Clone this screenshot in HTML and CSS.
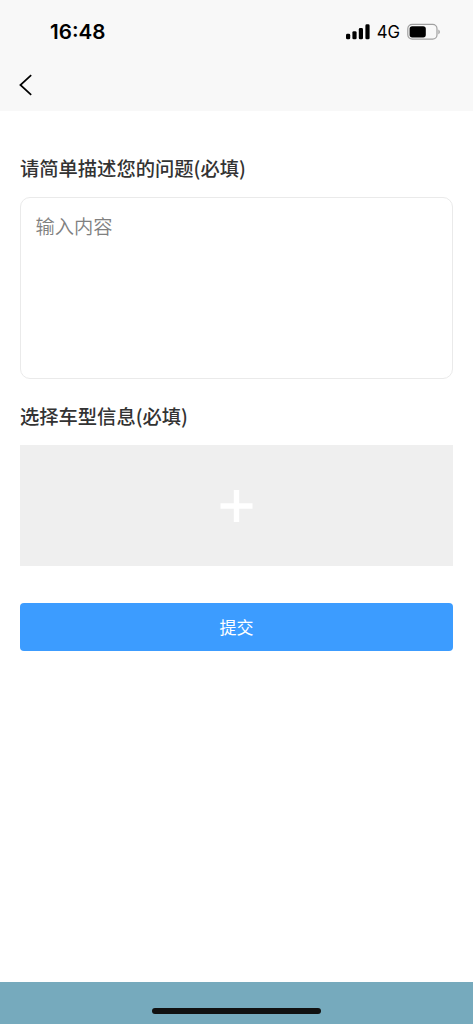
FILE: index.html
```
<!DOCTYPE html>
<html lang="zh-CN">
<head>
    <meta charset="UTF-8">
    <meta name="viewport" content="width=device-width, initial-scale=1.0">
    <title>提交问题</title>
    <link rel="stylesheet" href="styles.css">
</head>
<body>

<header>
    <div class="status-bar">
        <span class="time">16:48</span>
        <div class="status-icons">
            <svg class="signal" width="24" height="16" viewBox="0 0 24 16">
                <rect x="0" y="9.8" width="4.2" height="5.5" rx="1.4"/>
                <rect x="6.4" y="7.2" width="4.2" height="8.1" rx="1.4"/>
                <rect x="12.8" y="4" width="4.2" height="11.3" rx="1.4"/>
                <rect x="19.4" y="0.3" width="4.2" height="15" rx="1.4"/>
            </svg>
            <span class="network">4G</span>
            <svg class="battery" width="34" height="18" viewBox="0 0 34 18">
                <rect x="0.8" y="1.4" width="29.2" height="14.8" rx="4.4" fill="none" stroke="#a0a0a0" stroke-width="1.2"/>
                <rect x="2.6" y="3.2" width="16.2" height="11.2" rx="2.6"/>
                <path d="M31.4 6.4c1.9.7 1.9 4.1 0 4.8z" fill="#a0a0a0"/>
            </svg>
        </div>
    </div>
    <a href="#" class="back" aria-label="返回">
        <svg width="14" height="22" viewBox="0 0 14 22">
            <path d="M12.2 1.2L1.4 11l10.8 9.8" fill="none" stroke="#000" stroke-width="1.7"/>
        </svg>
    </a>
</header>

<form class="container">
    <label for="question">请简单描述您的问题(必填)</label>
    <textarea id="question" placeholder="输入内容"></textarea>

    <h2>选择车型信息(必填)</h2>
    <button type="button" class="add-car" aria-label="选择车型">
        <svg width="34" height="34" viewBox="0 0 34 34">
            <path d="M16.5 1v32M.5 17h32" stroke="#fff" stroke-width="5.4"/>
        </svg>
    </button>

    <button type="button" class="submit">提交</button>
</form>

<footer>
    <div class="home-indicator"></div>
</footer>

</body>
</html>
```
FILE: styles.css
```
* {
    box-sizing: border-box;
}
body {
    display: flex;
    flex-direction: column;
    height: 100vh;
    margin: 0;
    background-color: #fff;
    color: #333;
    font-family: "Noto Sans CJK SC", sans-serif;
}
header {
    height: 111px;
    background-color: #f8f8f8;
}
.status-bar {
    display: flex;
    justify-content: space-between;
    align-items: center;
    height: 64px;
    padding: 0 32px 0 50px;
    color: #000;
    font-family: Inter, sans-serif;
}
.time {
    padding-bottom: 2px;
    font-size: 20.6px;
    font-weight: 600;
}
.status-icons {
    display: flex;
    align-items: center;
}
.network {
    margin: 0 7px 0 7px;
    font-size: 16.8px;
}
.back {
    display: block;
    width: 14px;
    height: 22px;
    margin: 10px 0 0 19px;
}
.back svg {
    display: block;
}
.container {
    flex: 1;
    padding: 42px 20px 0;
}
label, h2 {
    display: block;
    margin: 0;
    font-size: 19.3px;
    font-weight: 500;
    line-height: 30px;
}
textarea {
    display: block;
    width: 100%;
    height: 182px;
    margin: 14px 0 22px;
    padding: 13px 15px 13px 14.5px;
    border: 1px solid #eaeaea;
    border-radius: 10px;
    outline: none;
    resize: none;
    font-family: inherit;
    font-size: 19.3px;
    font-weight: 350;
    line-height: 30px;
}
textarea::placeholder {
    color: #808080;
}
.add-car {
    display: flex;
    justify-content: center;
    align-items: center;
    width: 100%;
    height: 121px;
    margin: 14px 0 37px;
    padding: 0;
    border: none;
    background-color: #efefef;
}
.submit {
    display: block;
    width: 100%;
    height: 48px;
    padding: 0 0 2px;
    border: none;
    border-radius: 4px;
    background-color: #3c9cff;
    color: #fff;
    font-family: inherit;
    font-size: 17px;
}
footer {
    display: flex;
    justify-content: center;
    align-items: flex-end;
    height: 42px;
    padding-bottom: 10px;
    background-color: #76aabd;
}
.home-indicator {
    width: 169px;
    height: 6px;
    border-radius: 3px;
    background-color: #111;
}
```
